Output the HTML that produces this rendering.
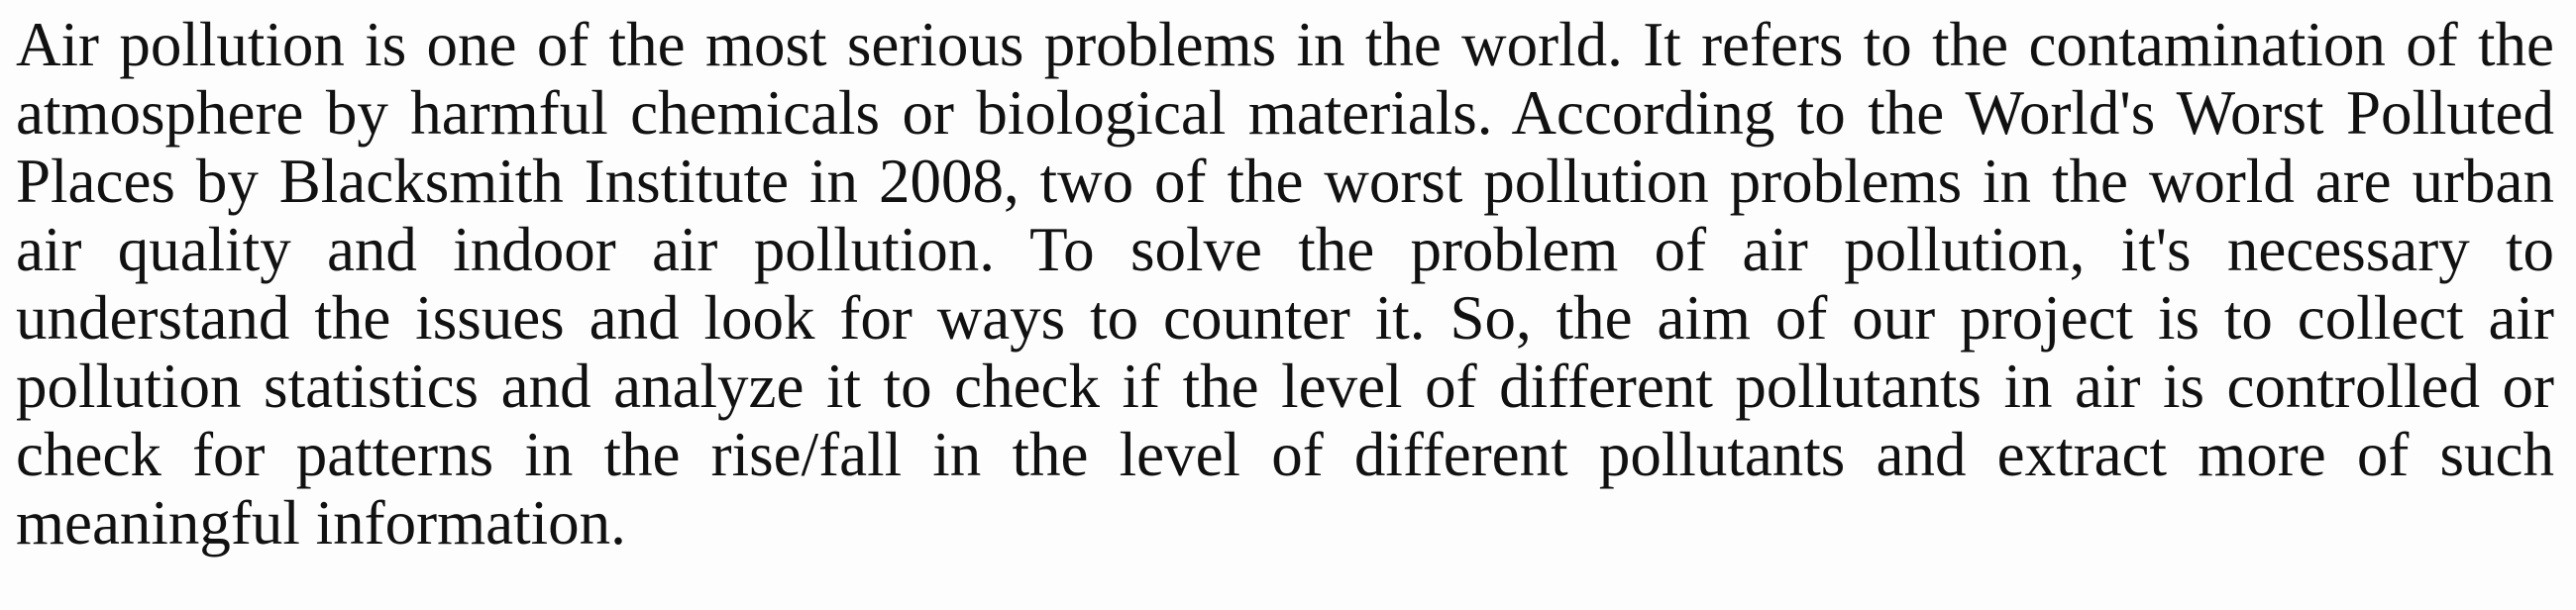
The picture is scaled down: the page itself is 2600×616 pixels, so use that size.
<!DOCTYPE html>
<html><head><style>
html,body{margin:0;padding:0;background:#fdfdfd;width:2600px;height:616px;overflow:hidden}
.t{position:absolute;left:16px;top:11px;width:2562px;font-family:"Liberation Serif",serif;font-size:63px;line-height:69px;color:#111}
.l{white-space:nowrap;text-align:justify;text-align-last:justify;height:69px}
.last{text-align-last:left}
</style></head><body>
<div class="t">
<div class="l">Air pollution is one of the most serious problems in the world. It refers to the contamination of the</div>
<div class="l">atmosphere by harmful chemicals or biological materials. According to the World's Worst Polluted</div>
<div class="l">Places by Blacksmith Institute in 2008, two of the worst pollution problems in the world are urban</div>
<div class="l">air quality and indoor air pollution. To solve the problem of air pollution, it's necessary to</div>
<div class="l">understand the issues and look for ways to counter it. So, the aim of our project is to collect air</div>
<div class="l">pollution statistics and analyze it to check if the level of different pollutants in air is controlled or</div>
<div class="l">check for patterns in the rise/fall in the level of different pollutants and extract more of such</div>
<div class="l last">meaningful information.</div>
</div>
</body></html>
